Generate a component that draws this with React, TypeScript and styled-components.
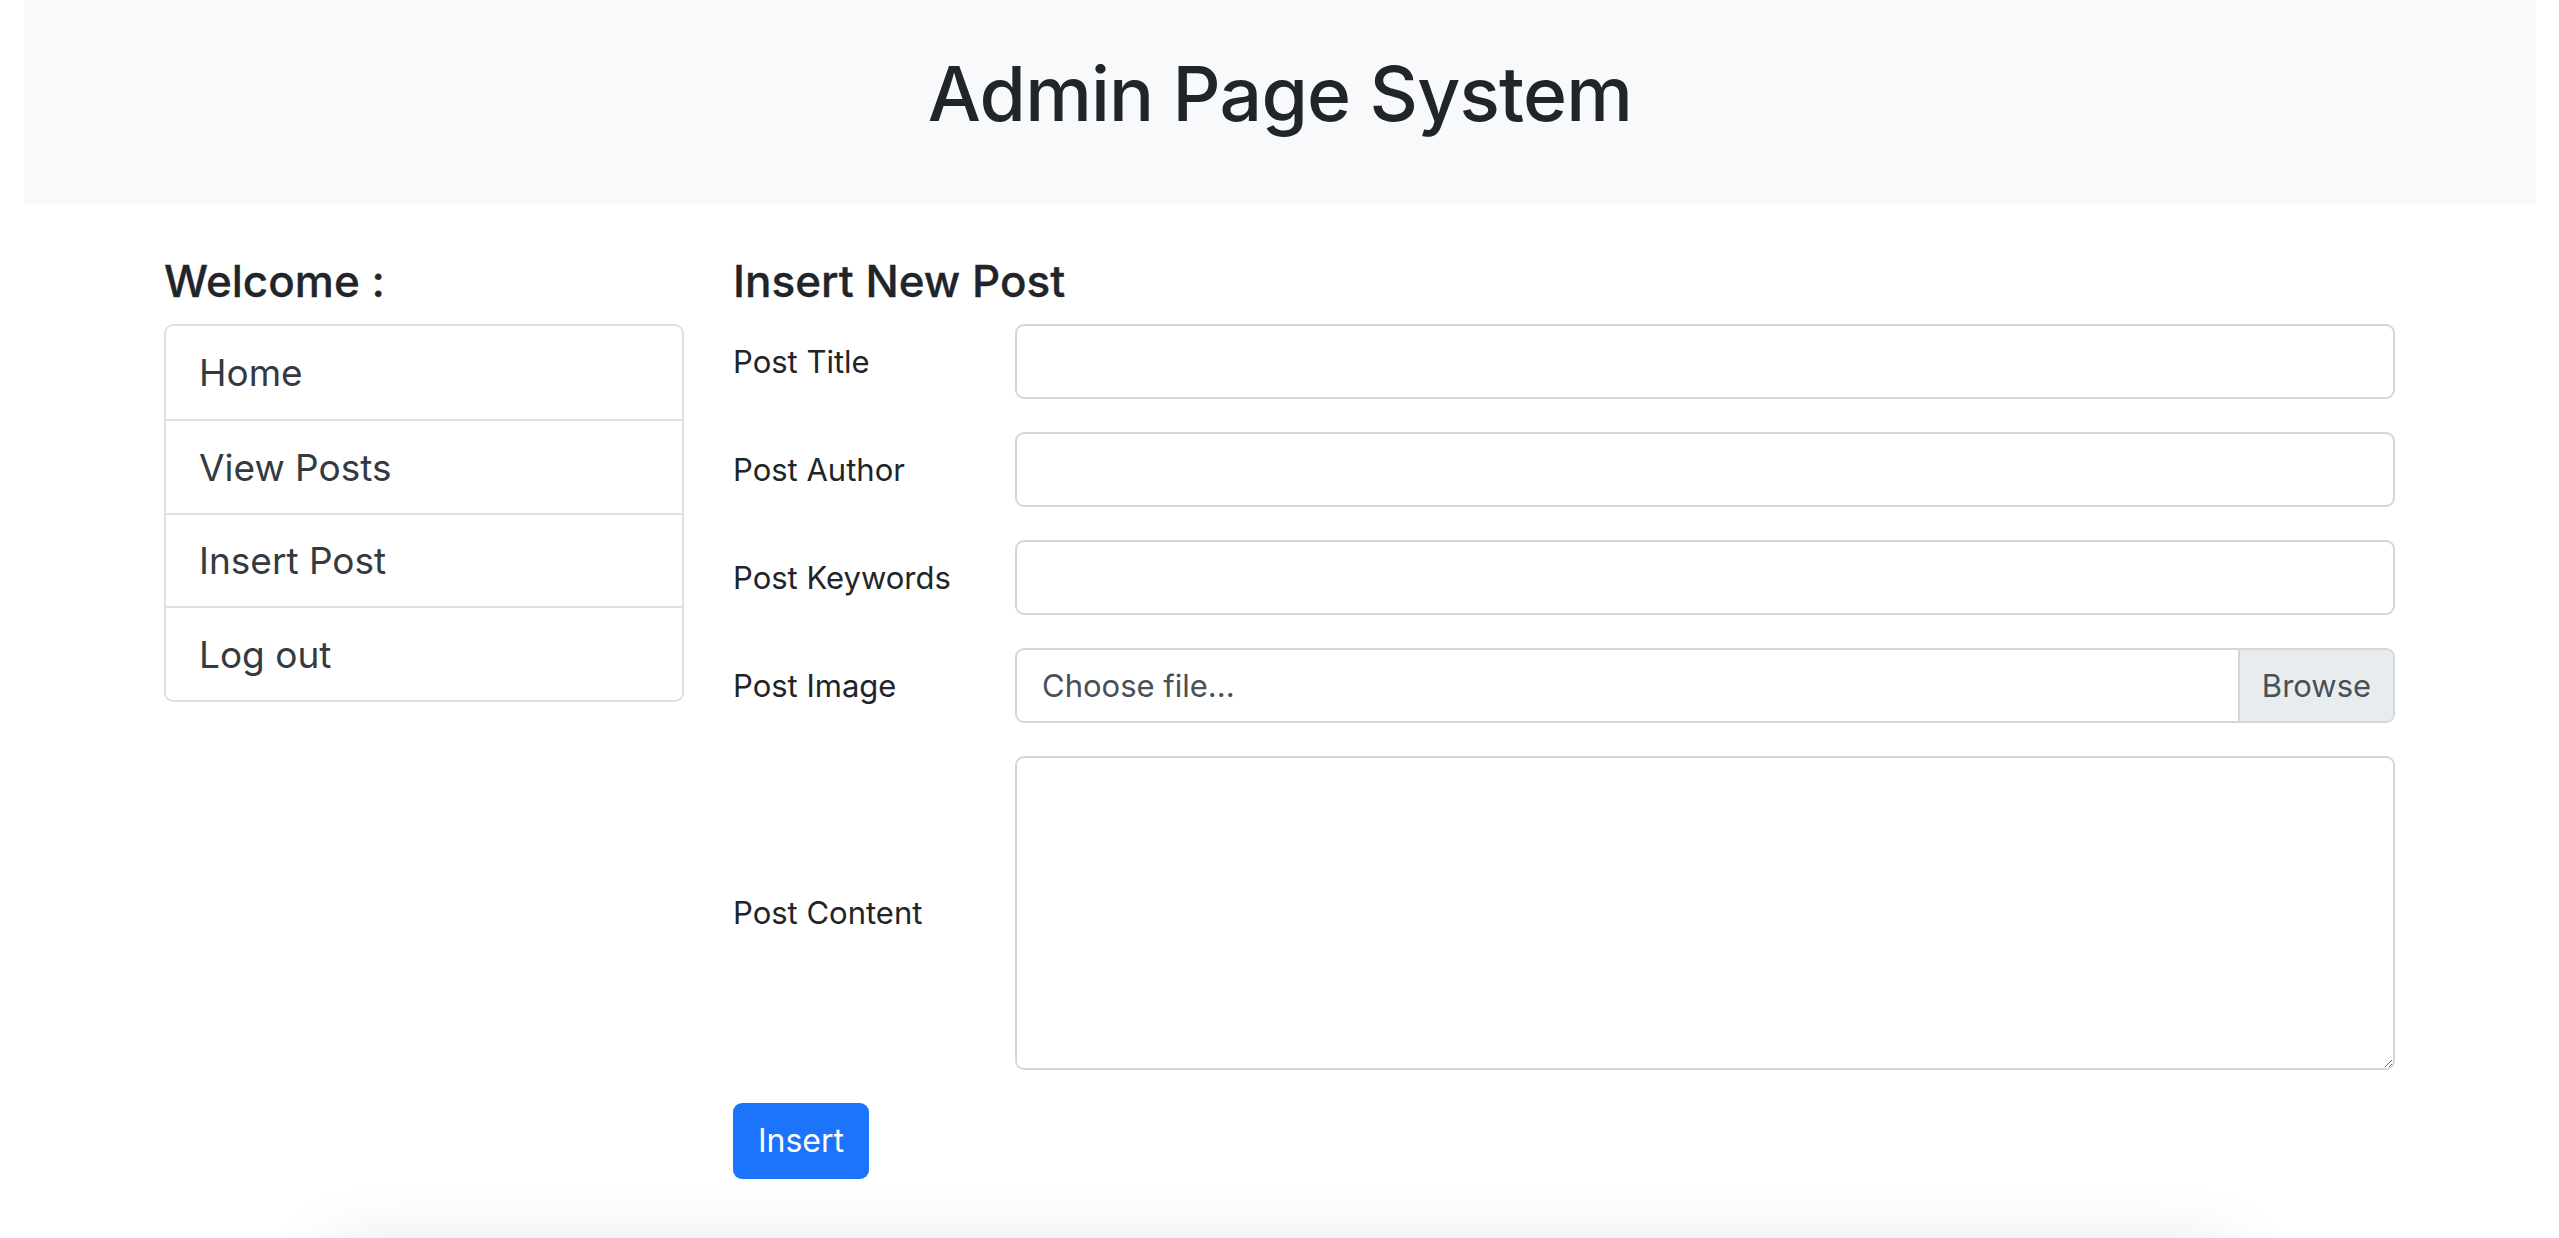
import React from 'react'
import { styled, createGlobalStyle } from 'styled-components'

const GlobalStyle = createGlobalStyle`
  * {
    box-sizing: border-box;
  }
  body {
    margin: 0;
    background: #ffffff;
    font-family: Inter, "Noto Sans", "Liberation Sans", sans-serif;
    color: #212529;
  }
`

const menu = ['Home', 'View Posts', 'Insert Post', 'Log out']

const fields = ['Post Title', 'Post Author', 'Post Keywords']

const App = () => {
  return (
    <>
      <GlobalStyle />
      <Header>
        <Title>Admin Page System</Title>
      </Header>
      <Container>
        <Sidebar>
          <Heading>Welcome :</Heading>
          <List>
            {menu.map((item) => (
              <Item key={item}>{item}</Item>
            ))}
          </List>
        </Sidebar>
        <Main>
          <Heading>Insert New Post</Heading>
          <Form onSubmit={(e) => e.preventDefault()}>
            {fields.map((f) => (
              <React.Fragment key={f}>
                <Label>{f}</Label>
                <Input type="text" />
              </React.Fragment>
            ))}
            <Label>Post Image</Label>
            <FileBox>
              <FileText>Choose file...</FileText>
              <Browse>Browse</Browse>
            </FileBox>
            <Label>Post Content</Label>
            <TextArea />
          </Form>
          <Button type="button">Insert</Button>
        </Main>
      </Container>
      <Footer />
    </>
  )
}

export default App

const Header = styled.header`
  margin: 0 23px 0 24px;
  height: 204px;
  background-color: #f8f9fa;
  display: flex;
  align-items: center;
  justify-content: center;
  padding-bottom: 16px;
`
const Title = styled.h1`
  margin: 0;
  font-size: 75px;
  font-weight: 500;
  line-height: 1.2;
  color: #212529;
  letter-spacing: -0.8px;
`
const Container = styled.div`
  width: 2231px;
  margin: 0 auto;
  padding-top: 51px;
  display: grid;
  grid-template-columns: 520px 1fr;
  column-gap: 49px;
`
const Sidebar = styled.aside`
  display: flex;
  flex-direction: column;
`
const Main = styled.section`
  display: flex;
  flex-direction: column;
`
const Heading = styled.h4`
  margin: 0 0 16px;
  font-size: 44px;
  font-weight: 500;
  line-height: 1.2;
  color: #212529;
  -webkit-text-stroke: 0.3px #212529;
`
const List = styled.ul`
  list-style: none;
  margin: 0;
  padding: 0;
  border: 2px solid #e0e0e0;
  border-radius: 9px;
`
const Item = styled.li`
  height: 93.5px;
  padding: 0 33px;
  display: flex;
  align-items: center;
  font-size: 37px;
  color: #343a40;
  & + & {
    border-top: 2px solid #e0e0e0;
  }
`
const Form = styled.form`
  display: grid;
  grid-template-columns: 282px 1fr;
  row-gap: 33px;
  align-items: center;
`
const Label = styled.label`
  font-size: 31px;
  color: #212529;
`
const Input = styled.input`
  height: 75px;
  width: 100%;
  border: 2px solid #d2d7dc;
  border-radius: 9px;
  padding: 0 24px;
  font-size: 31.5px;
  font-family: inherit;
  outline: none;
`
const FileBox = styled.div`
  height: 75px;
  display: flex;
  border: 2px solid #d2d7dc;
  border-radius: 9px;
  overflow: hidden;
`
const FileText = styled.span`
  flex: 1;
  display: flex;
  align-items: center;
  padding-left: 25px;
  font-size: 31px;
  color: #495057;
`
const Browse = styled.span`
  width: 155px;
  display: flex;
  align-items: center;
  justify-content: center;
  background-color: #e9ecef;
  border-left: 2px solid #d2d7dc;
  font-size: 31px;
  color: #495057;
`
const TextArea = styled.textarea`
  height: 314px;
  width: 100%;
  border: 2px solid #d2d7dc;
  border-radius: 9px;
  padding: 12px 24px;
  font-size: 31.5px;
  font-family: inherit;
  outline: none;
`
const Button = styled.button`
  margin-top: 33px;
  align-self: flex-start;
  width: 136px;
  height: 76px;
  border: 0;
  border-radius: 9px;
  background-color: #1b74fb;
  color: #ffffff;
  font-size: 32px;
  font-family: inherit;
  cursor: pointer;
`
const Footer = styled.footer`
  width: 1900px;
  height: 120px;
  margin: 72px auto 0;
  background: #ffffff;
  box-shadow: 0 0 70px rgba(0, 0, 0, 0.13);
`
